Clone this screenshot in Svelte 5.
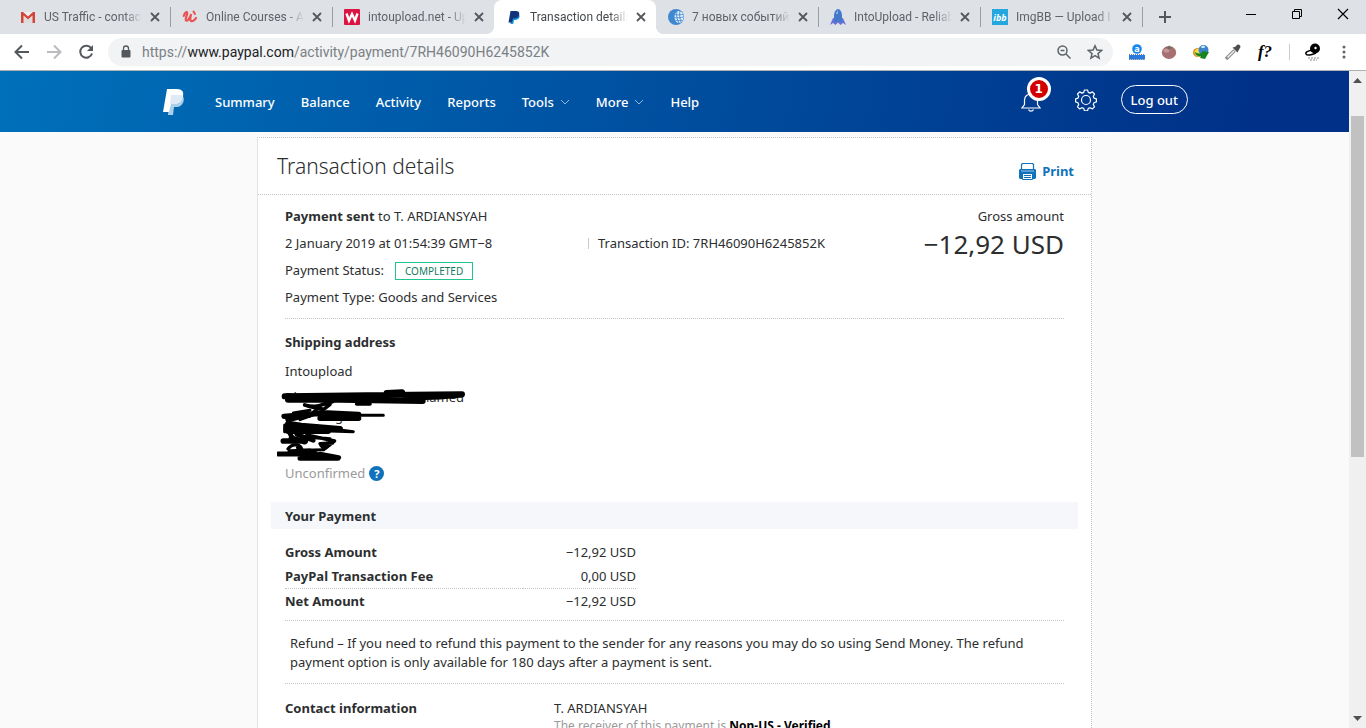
<script>
  const tabs = [
    { icon: 'gmail', title: 'US Traffic - contact' },
    { icon: 'udemy', title: 'Online Courses - A' },
    { icon: 'w', title: 'intoupload.net - Up' },
    { icon: 'paypal', title: 'Transaction details', active: true },
    { icon: 'globe', title: '7 новых событий' },
    { icon: 'rocket', title: 'IntoUpload - Reliab' },
    { icon: 'ibb', title: 'ImgBB — Upload I' }
  ];
  const links = ['Summary', 'Balance', 'Activity', 'Reports', 'Tools', 'More', 'Help'];
  const amounts = [
    ['Gross Amount', '−12,92 USD'],
    ['PayPal Transaction Fee', '0,00 USD'],
    ['Net Amount', '−12,92 USD']
  ];
</script>

{#snippet favicon(name)}
  <svg class="fav" viewBox="0 0 16 16" aria-hidden="true">
    {#if name === 'gmail'}
      <path d="M1 3h14v11H1z" fill="#eee" />
      <path d="M3 14V7l5 4 5-4v7z" fill="#dcdcdc" />
      <path d="M1 3h2l5 4.500L13 3h2v11h-2.500V6.500L8 10.500 3.500 6.500V14H1z" fill="#d5443a" />
    {:else if name === 'udemy'}
      <path d="M1.800 7C2.500 4.500 4 2.800 5 3.200 6.500 4 2.500 10 4 11.500c1.500 1.200 4-2.500 5.200-6.500C8 9 7.800 12 9.500 12.200c1.500.2 3.500-1.700 4.500-3.200" fill="none" stroke="#ec5252" stroke-width="2.200" stroke-linecap="round" />
      <path d="M11.500 2.500 13 5" stroke="#ec5252" stroke-width="2" stroke-linecap="round" />
    {:else if name === 'w'}
      <rect width="16" height="16" rx="1" fill="#dc1441" />
      <path d="M2.500 4.500 5 11.500l3-6.500 3 6.500 2.500-7" fill="none" stroke="#fff" stroke-width="2.400" />
    {:else if name === 'paypal'}
      <path d="M6 5h6.500c2.500 2 .5 6-3 6H8l-.8 4H4.500z" fill="#179bd7" />
      <path d="M4.500 2H10c3.500 0 4 3 2.500 5.500C11.500 9.500 9 9.500 7 9.500L6 13.500H2.500z" fill="#12347b" />
    {:else if name === 'globe'}
      <circle cx="8" cy="8" r="8" fill="#3f87cf" />
      <ellipse cx="11" cy="8" rx="4.500" ry="6" fill="#e7f2fc" />
      <path d="M9 3c-1 3 0 8 2 11M12 2c-1 4 0 8 1 11M7 5.500c3 1 6 0 8 0M6.500 8.500c3 1 6 0 9-.5M7.500 11.500c3 .5 5 0 7-.5" fill="none" stroke="#3f87cf" stroke-width=".9" />
    {:else if name === 'rocket'}
      <path d="M0 16 3 9l5 1 5-1 3 7-3-2-2.500 2L8 13.500 5.500 16 3 14z" fill="#6871d8" />
      <path d="M4 13V7c0-4 2-7 4-7s4 3 4 7v6z" fill="#4578c9" />
      <path d="M6 5c0-2 1-3 2-4v4z" fill="#7fb4ea" />
    {:else}
      <rect width="16" height="16" fill="#24a6df" />
      <text x="8" y="12" text-anchor="middle" class="ibb">ibb</text>
    {/if}
  </svg>
{/snippet}

<div class="browser">
  <div class="strip">
    {#each tabs as tab}
      <div class="tab" class:active={tab.active}>
        {@render favicon(tab.icon)}
        <span class="name">{tab.title}</span>
        <button class="x" aria-label="Close tab">
          <svg width="10" height="10" viewBox="0 0 10 10"><path d="M1 1l8 8M9 1 1 9" stroke="#54585d" stroke-width="1.800" /></svg>
        </button>
      </div>
    {/each}
    <button class="new" aria-label="New tab">
      <svg width="14" height="14" viewBox="0 0 14 14"><path d="M7 1v12M1 7h12" stroke="#54585d" stroke-width="2" /></svg>
    </button>
    <div class="win">
      <button aria-label="Minimize"><svg width="12" height="12" viewBox="0 0 12 12"><path d="M1 6.500h10" stroke="#000" /></svg></button>
      <button aria-label="Restore"><svg width="12" height="12" viewBox="0 0 12 12" fill="none" stroke="#000"><path d="M1.500 3.500h7v7h-7zM3.500 3V1.500h7v7H9" /></svg></button>
      <button aria-label="Close"><svg width="12" height="12" viewBox="0 0 12 12"><path d="M1 1l10 10M11 1 1 11" stroke="#000" stroke-width="1.200" /></svg></button>
    </div>
  </div>

  <div class="toolbar">
    <button aria-label="Back"><svg width="16" height="16" viewBox="0 0 16 16" fill="none" stroke="#54585d" stroke-width="2"><path d="M15 8H2M8 1.500 1.500 8 8 14.500" /></svg></button>
    <button aria-label="Forward"><svg width="16" height="16" viewBox="0 0 16 16" fill="none" stroke="#b9bbbe" stroke-width="2"><path d="M1 8h13M8 1.500 14.500 8 8 14.500" /></svg></button>
    <button aria-label="Reload"><svg width="16" height="16" viewBox="0 0 16 16"><path d="M13.200 4.300A6 6 0 1 0 14 9.500" fill="none" stroke="#54585d" stroke-width="2" /><path d="M15 1v6H9z" fill="#54585d" /></svg></button>
    <div class="omni">
      <svg width="10" height="14" viewBox="0 0 10 14"><rect x="0.500" y="5" width="9" height="7.500" rx="1" fill="#54585d" /><path d="M2.500 5V3.500a2.500 2.500 0 0 1 5 0V5" fill="none" stroke="#54585d" stroke-width="1.300" /></svg>
      <span class="url">https://<b>www.paypal.com</b>/activity/payment/7RH46090H6245852K</span>
      <button aria-label="Zoom"><svg width="14" height="14" viewBox="0 0 14 14" fill="none" stroke="#5f6368" stroke-width="1.500"><circle cx="5.500" cy="5.500" r="4.500" /><path d="m9 9 4.500 4.500M3.500 5.500h4" /></svg></button>
      <button aria-label="Bookmark"><svg width="16" height="16" viewBox="0 0 16 16"><path d="m8 1.800 1.900 4.300 4.700.4-3.600 3.100 1.100 4.600L8 11.700l-4.100 2.500L5 9.600 1.400 6.500l4.700-.4z" fill="none" stroke="#5f6368" stroke-width="1.500" /></svg></button>
    </div>
    <div class="ext">
      <button aria-label="Counter"><svg width="16" height="16" viewBox="0 0 16 16"><rect x="0" y="11" width="16" height="4.500" fill="#2c78dc" /><path d="M0 10.500h16M0 15.500h16" stroke="#70839b" stroke-dasharray="1 1" /><circle cx="8" cy="5" r="4.800" fill="#1787ee" /><text x="8" y="8" text-anchor="middle" class="ea">a</text></svg></button>
      <button aria-label="Tomato"><svg width="16" height="16" viewBox="0 0 16 16"><ellipse cx="8" cy="8.500" rx="7.200" ry="6.500" fill="#a86f70" /><ellipse cx="5.500" cy="6.500" rx="3" ry="2" fill="#c69697" /><path d="M4 4 7.500 3 8 1l1 2 3 1-3 .5L8 6 7 4.500z" fill="#6e6a62" /></svg></button>
      <button aria-label="Download manager"><svg width="16" height="16" viewBox="0 0 16 16"><ellipse cx="4.500" cy="8.500" rx="4.500" ry="4.500" fill="#e48a2c" /><ellipse cx="6" cy="8.500" rx="4.500" ry="4" fill="#f1de43" /><circle cx="10.500" cy="6" r="5" fill="#3c83cb" /><path d="M8 3c2-2 4-1 4 0s-3 2-4 0z" fill="#d5ecf8" /><path d="M2 8c3 2 5 1.500 7 1V7l7 1-4 7-5-1 1-1.500C5 12.500 2 11 2 8z" fill="#16851f" /></svg></button>
      <button aria-label="Colour picker"><svg width="16" height="16" viewBox="0 0 16 16"><path d="m9.500 6.500-7 7-1.500 1.500" stroke="#8d8d8d" stroke-width="3.500" /><path d="m9 7-6.500 6.500" stroke="#eee" stroke-width="1.500" /><path d="m7.500 3.500 5 5 1-2 2-3.500c0-2-2-3-3.500-2L10 3z" fill="#4e4e50" /></svg></button>
      <button aria-label="Fonts" class="fq">f?</button>
    </div>
    <i class="bar"></i>
    <button class="profile" aria-label="Profile"><svg width="18" height="18" viewBox="0 0 18 18"><circle cx="11" cy="5.500" r="5" fill="#000" /><circle cx="11.500" cy="5" r="1.200" fill="#fff" /><path d="M8 7C4 8 1 9 2 11s6 1 10-1" fill="none" stroke="#000" stroke-width="1.500" /><path d="M4 15h11M6 17h7" stroke="#888" stroke-dasharray="2 1" /></svg></button>
    <button aria-label="Menu"><svg width="4" height="16" viewBox="0 0 4 16" fill="#5f6368"><circle cx="2" cy="3" r="1.500" /><circle cx="2" cy="8" r="1.500" /><circle cx="2" cy="13" r="1.500" /></svg></button>
  </div>

  <div class="view">
    <div class="page">
      <header>
        <div class="nav">
          <a class="logo" href="#home" aria-label="PayPal home">
            <svg width="22" height="26" viewBox="0 0 22 26"><path d="M7 6h12c4 4 1 12-6 12h-2l-1 8H5z" fill="#a9cfe9" /><path d="M4 0h10c5 0 7 3 6 7-1 6-5 8-10 8H8l-2 8H0z" fill="#fff" /><path d="M8 6h11c1 6-3 9-8 9H7z" fill="#dfeaf5" /></svg>
          </a>
          <nav>
            {#each links as link}
              <a href="#{link}">{link}{#if link === 'Tools' || link === 'More'}<svg width="10" height="6" viewBox="0 0 10 6"><path d="m1 1 4 4 4-4" fill="none" stroke="#8fb9e0" /></svg>{/if}</a>
            {/each}
          </nav>
          <button class="bell" aria-label="Notifications">
            <svg width="20" height="20" viewBox="0 0 20 20" fill="none" stroke="#fff" stroke-width="1.200"><path d="M1 16h18l-2.500-3.500V8c0-8-13-8-13 0v4.500zM7.500 17.500c1 2.200 4 2.200 5 0" /></svg>
            <span class="count">1</span>
          </button>
          <button class="gear" aria-label="Settings">
            <svg width="22" height="22" viewBox="-11 -11 22 22" fill="none" stroke="#fff" stroke-width="1.200" stroke-linejoin="round"><circle r="4.500" /><path d="M-1.500-10h3l.8 2.400 1.700.7 2.400-1.200 2.100 2.100-1.200 2.400.7 1.700 2.400.8v3l-2.400.8-.7 1.700 1.200 2.400-2.100 2.100-2.400-1.200-1.700.7-.8 2.400h-3l-.8-2.400-1.700-.7-2.400 1.200-2.100-2.100 1.200-2.400-.7-1.700-2.400-.8v-3l2.400-.8.7-1.700-1.200-2.400 2.100-2.100 2.400 1.200 1.700-.7z" /></svg>
          </button>
          <button class="logout">Log out</button>
        </div>
      </header>

      <main>
        <div class="head">
          <h1>Transaction details</h1>
          <button class="print">
            <svg width="17" height="17" viewBox="0 0 17 17"><path d="M2.500 6V1.500l1-1h10l1 1V6" fill="none" stroke="#1072bb" stroke-width="1.200" /><path d="M1 6h15l1 1v8l-1 1H1l-1-1V7z" fill="#1072bb" /><path d="M2 8h13" stroke="#9cc6e6" /><path d="M3.500 10.500h10v6h-10z" fill="#fff" stroke="#1072bb" /><path d="M5 12.500h7M5 14.500h7" stroke="#1072bb" /></svg>
            Print
          </button>
        </div>

        <div class="body">
          <section class="summary">
            <div class="facts">
              <p><b>Payment sent</b> to T. ARDIANSYAH</p>
              <p class="date"><span>2 January 2019 at 01:54:39 GMT−8</span><span class="tid">Transaction ID: 7RH46090H6245852K</span></p>
              <p class="state">Payment Status: <span class="status">COMPLETED</span></p>
              <p>Payment Type: Goods and Services</p>
            </div>
            <div class="gross">
              <p>Gross amount</p>
              <strong>−12,92 USD</strong>
            </div>
          </section>

          <section class="ship">
            <h2>Shipping address</h2>
            <p>Intoupload</p>
            <div class="address">
              <p class="first"><span>Bl</span><span>hamed</span></p>
              <p class="second">g</p>
              <svg width="192" height="76" viewBox="51 186 576 228" fill="none" stroke="#000" stroke-linecap="round" stroke-linejoin="round" aria-hidden="true">
                <path d="M74 214 200 212 380 210 606 208M84 224 240 224 488 228M380 204l46-2" stroke-width="18" />
                <path d="M606 212 540 218 430 222M290 237h40M134 240c40 12 50-4 84-10M140 242l50 12 20-16" stroke-width="11" />
                <path d="M72 274l70-6 60-4 94 4M180 280h116M84 284l34-8" stroke-width="16" />
                <path d="M300 271h70M150 274c8-14 14-20 34-24M100 264l50-8M120 284l50-18" stroke-width="9" />
                <path d="M84 296l40 6 116 10M80 312l4-14M84 318h120" stroke-width="18" />
                <path d="M74 300v20M200 310l80 10-70-2" stroke-width="9" />
                <path d="M90 326 100 344M110 328l50 18" stroke-width="14" />
                <path d="M70 348h66M94 340l40 10" stroke-width="17" />
                <path d="M140 330 224 348 196 370 180 356 218 354M150 336l60 6M84 372c14-20 40-14 42 4" stroke-width="10" />
                <path d="M182 362 200 354 190 370z" fill="#000" stroke-width="8" />
                <path d="M54 387h60l80 6M90 380l60-2 30 14M120 400h114M180 388l56 10" stroke-width="15" />
                <path d="M112 368l20 8 60-2" stroke-width="9" />
              </svg>
            </div>
            <p class="unconf">Unconfirmed <button aria-label="Help">?</button></p>
          </section>

          <h2 class="band">Your Payment</h2>

          <section class="money">
            <table>
              <tbody>
                {#each amounts as [label, value]}
                  <tr><th scope="row">{label}</th><td>{value}</td></tr>
                {/each}
              </tbody>
            </table>
          </section>

          <p class="refund">Refund – If you need to refund this payment to the sender for any reasons you may do so using Send Money. The refund payment option is only available for 180 days after a payment is sent.</p>

          <section class="contact">
            <h2>Contact information</h2>
            <div>
              <p>T. ARDIANSYAH</p>
              <p class="note">The receiver of this payment is <b>Non-US - Verified</b></p>
            </div>
          </section>
        </div>
      </main>
    </div>
    <div class="scroll">
      <svg width="9" height="5" viewBox="0 0 9 5"><path d="M0 5 4.500 0 9 5z" fill="#505050" /></svg>
      <div class="thumb"></div>
      <svg width="9" height="5" viewBox="0 0 9 5"><path d="M0 0h9L4.500 5z" fill="#505050" /></svg>
    </div>
  </div>
</div>

<style>
  :global(body) { margin: 0; }
  * { box-sizing: border-box; }
  p, h1, h2 { margin: 0; font-size: inherit; }
  button { padding: 0; border: 0; background: none; font: inherit; color: inherit; display: flex; align-items: center; justify-content: center; }
  a { color: inherit; text-decoration: none; }
  svg { display: block; flex: none; }

  .browser { height: 100vh; display: flex; flex-direction: column; overflow: hidden; font-family: "Noto Sans", sans-serif; font-size: 13px; color: #2c2e2f; }

  .strip { flex: none; height: 34px; background: #dee1e6; display: flex; align-items: stretch; padding-left: 8px; font: 12px Roboto, sans-serif; color: #5f6368; }
  .tab { flex: 0 1 162px; min-width: 0; display: flex; align-items: center; padding: 0 10px 0 12px; position: relative; }
  .tab:not(.active)::after { content: ""; position: absolute; right: -1px; top: 7px; height: 20px; width: 1px; background: #9a9da2; }
  .tab:nth-child(3)::after { display: none; }
  .tab.active { background: #fff; border-radius: 8px 8px 0 0; color: #45494d; }
  .tab.active::before, .tab.active::after { content: ""; position: absolute; bottom: 0; width: 8px; height: 8px; }
  .tab.active::before { left: -8px; background: radial-gradient(circle at 0 0, transparent 8px, #fff 8px); }
  .tab.active::after { right: -8px; background: radial-gradient(circle at 100% 0, transparent 8px, #fff 8px); }
  .fav { width: 16px; height: 16px; }
  .ibb { font: italic 700 9px "Open Sans", sans-serif; fill: #fff; }
  .ea { font: 700 9px "Open Sans", sans-serif; fill: #fff; }
  .name { flex: 1; margin: 0 8px; overflow: hidden; white-space: nowrap; mask-image: linear-gradient(90deg, #000 82%, transparent); }
  .new { width: 46px; }
  .win { margin-left: auto; display: flex; padding-bottom: 6px; }
  .win button { width: 46px; }

  .toolbar { flex: none; height: 37px; background: #fff; border-bottom: 1px solid #b0b1b3; display: flex; align-items: center; padding: 0 20px 0 14px; gap: 16px; }
  .omni { flex: 1; height: 28px; border-radius: 14px; background: #f1f3f4; display: flex; align-items: center; gap: 16px; padding: 0 10px 0 13px; margin-left: -2px; }
  .url { flex: 1; margin-left: -5px; font: 14px Roboto, sans-serif; color: #7b8085; white-space: nowrap; overflow: hidden; }
  .url b { font-weight: 400; color: #202124; }
  .ext { display: flex; gap: 16px; }
  .fq { font: italic 700 17px "Liberation Serif", serif; color: #000; width: 16px; }
  .bar { width: 1px; height: 16px; background: #c9cbce; }
  .profile { margin: 0 4px 0 -2px; }

  .view { flex: 1; min-height: 0; display: flex; }
  .page { flex: 1; min-width: 0; background: #fafafa; overflow: hidden; }
  .scroll { width: 17px; background: #f0f0f0; display: flex; flex-direction: column; align-items: center; padding: 7px 0; }
  .thumb { width: 13px; height: 53%; margin: 33px 0 auto; background: #c1c1c1; }

  header { height: 61px; background: linear-gradient(100deg, #0070ba, #003087 94%); color: #fff; display: flex; align-items: center; }
  .nav { width: 100%; max-width: 1027px; margin: 0 auto; padding-left: 2px; display: flex; align-items: center; gap: 30px; }
  nav { flex: 1; display: flex; gap: 26px; font-weight: 500; }
  nav a { display: flex; align-items: center; gap: 6px; }
  .bell { position: relative; }
  .gear { margin: 0 -6px 4px 4px; }
  .count { position: absolute; left: 6px; top: -15px; width: 24px; height: 24px; border: 3px solid #fff; border-radius: 50%; background: #d20000; font: 700 12px/18px "DejaVu Sans", sans-serif; }
  .logout { height: 29px; padding: 0 9px; border: 1px solid #fff; border-radius: 15px; font-weight: 500; margin-bottom: 4px; }

  main { max-width: 835px; margin: 5px auto 0; background: #fff; border: 1px dotted #c4c4c4; border-left: 1px solid #e4e4e4; }
  .head { height: 57px; padding: 0 17px 0 19px; border-bottom: 1px dotted #c4c4c4; display: flex; align-items: center; justify-content: space-between; }
  h1 { font-size: 21px; font-weight: 300; line-height: 30px; }
  .print { gap: 6px; color: #1072bb; font-weight: 700; padding-top: 10px; }
  .body { padding: 0 27px; }

  .summary { display: flex; padding: 8px 0 7px; border-bottom: 1px dotted #c4c4c4; }
  .facts { flex: 1; line-height: 27px; }
  .date { display: flex; }
  .date span:first-child { width: 303px; }
  .tid { padding-left: 10px; background: linear-gradient(#ccc, #ccc) 0 50% / 1px 11px no-repeat; }
  .state { display: flex; align-items: center; gap: 11px; }
  .status { padding: 0 9px; border: 1px solid #1fc58c; color: #147a5c; font-size: 10px; line-height: 16px; }
  .gross { text-align: right; line-height: 27px; }
  .gross strong { display: block; font-size: 26px; font-weight: 400; line-height: 28px; }

  .ship { padding: 14px 0 19px; line-height: 19px; }
  .ship h2 { margin-bottom: 10px; }
  .address { position: relative; height: 76px; margin-top: 7px; }
  .address p { display: flex; }
  .address svg { position: absolute; left: -8px; top: -1px; }
  .first { width: 179px; justify-content: space-between; }
  .second { padding-left: 50px; }
  .unconf { display: flex; align-items: center; gap: 4px; color: #9a9a9a; }
  .unconf button { width: 15px; height: 15px; border-radius: 50%; background: #1072bb; color: #fff; font-size: 11px; font-weight: 700; }

  .band { margin: 0 -14px; padding: 1px 14px 0; background: #f5f7fb; line-height: 26px; }
  .money { padding: 11px 0 7px; border-bottom: 1px dotted #c4c4c4; }
  table { width: 351px; border-collapse: collapse; line-height: 24px; }
  th { padding: 0; text-align: left; }
  td { padding: 0; text-align: right; }
  tr:last-child { border-top: 1px dotted #c4c4c4; }
  .refund { padding: 13px 40px 11px 5px; line-height: 19px; border-bottom: 1px dotted #c4c4c4; }
  .contact { display: flex; padding-top: 15px; line-height: 18px; }
  .contact h2 { width: 269px; }
  .note { color: #9a9a9a; font-size: 12px; }
  .note b { color: #000; }
</style>
